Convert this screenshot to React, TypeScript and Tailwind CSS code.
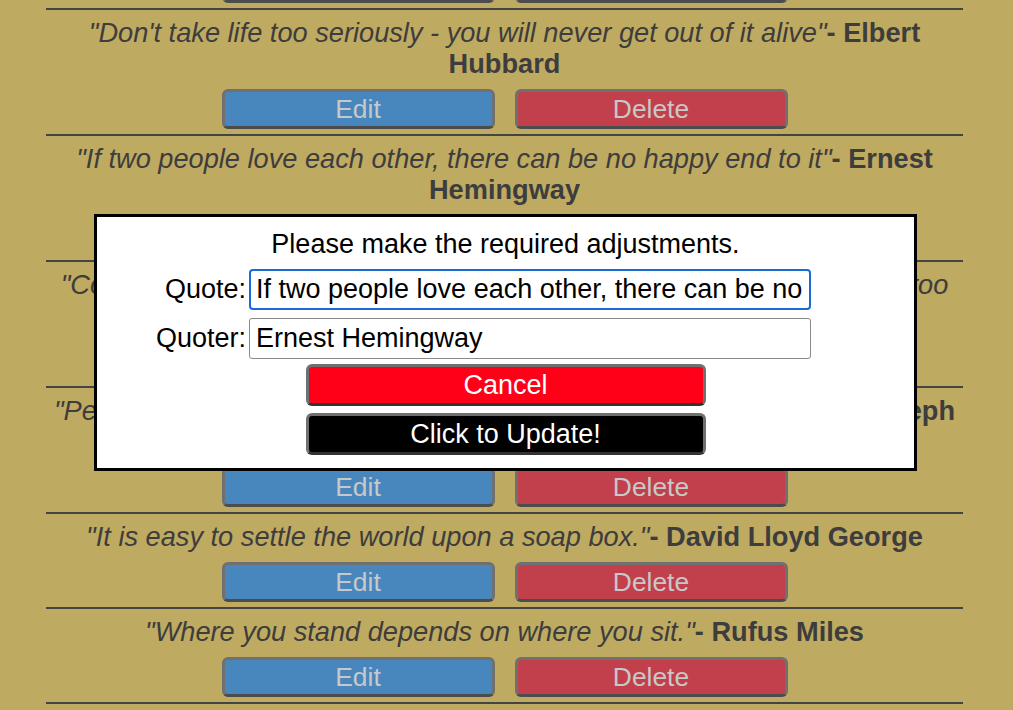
const quotes = [
  { text: "Success is not final, failure is not fatal.", author: "Winston Churchill" },
  { text: "Don't take life too seriously - you will never get out of it alive", author: "Elbert Hubbard" },
  { text: "If two people love each other, there can be no happy end to it", author: "Ernest Hemingway" },
  { text: "Comedy is simply a funny way of being serious, but never take things too seriously", author: "Peter Ustinov" },
  { text: "People who say it can't be done should not bother those doing it", author: "Joseph Joubert" },
  { text: "It is easy to settle the world upon a soap box.", author: "David Lloyd George" },
  { text: "Where you stand depends on where you sit.", author: "Rufus Miles" },
  { text: "The only way to do great work is to love what you do.", author: "Steve Jobs" },
];

const QuoteRow = ({ text, author }: { text: string; author: string }) => (
  <div className="border-t-2 border-[#444] pt-[7px] pb-[5px] text-center">
    <p className="text-[27.2px] leading-[31px] text-[#3d3d3d]">
      <i>"{text}"</i>
      <b>- {author}</b>
    </p>
    <div className="mt-[10px] flex justify-center gap-[20px]">
      <button className="h-[40px] w-[273px] rounded-[6px] border-[3px] border-[#707070] border-b-[#4c4c4c] bg-[#4887bd] text-[26.4px] leading-none text-[#c8c8c8]">
        Edit
      </button>
      <button className="h-[40px] w-[273px] rounded-[6px] border-[3px] border-[#707070] border-b-[#4c4c4c] bg-[#c1404c] text-[26.4px] leading-none text-[#c8c8c8]">
        Delete
      </button>
    </div>
  </div>
);

export default function App() {
  return (
    <div className="relative h-[710px] overflow-hidden bg-[#bfaa61] font-['Liberation_Sans',Arial,sans-serif]">
      {/* Quote list, scrolled */}
      <div className="-mt-[87px] ml-[46px] w-[917px]">
        {quotes.map((q) => (
          <QuoteRow key={q.text} text={q.text} author={q.author} />
        ))}
      </div>

      {/* Edit modal */}
      <div className="absolute left-[94px] top-[214px] flex h-[257px] w-[823px] flex-col items-center border-[3px] border-black bg-white pt-[12px]">
        <p className="h-[30px] text-[27px] leading-[30px] text-black">Please make the required adjustments.</p>
        <div className="mt-[10px] flex w-full items-center gap-[3px]">
          <label className="w-[149px] text-right text-[27px] text-black">Quote:</label>
          <input
            readOnly
            value="If two people love each other, there can be no happy end to it"
            className="h-[41px] w-[562px] rounded-[4px] border-2 border-[#1a6bd6] px-[5px] text-[27px] text-black outline-none"
          />
        </div>
        <div className="mt-[8px] flex w-full items-center gap-[3px]">
          <label className="w-[149px] text-right text-[27px] text-black">Quoter:</label>
          <input
            readOnly
            value="Ernest Hemingway"
            className="h-[41px] w-[562px] rounded-[3px] border border-[#8a8a8a] px-[6px] text-[27px] text-black outline-none"
          />
        </div>
        <button className="mt-[5px] h-[42px] w-[400px] rounded-[6px] border-[3px] border-[#707070] border-b-[#333] bg-[#ff0018] text-[27px] leading-none text-white">
          Cancel
        </button>
        <button className="mt-[7px] h-[42px] w-[400px] rounded-[6px] border-[3px] border-[#707070] border-b-[#333] bg-black text-[27px] leading-none text-white">
          Click to Update!
        </button>
      </div>
    </div>
  );
}
